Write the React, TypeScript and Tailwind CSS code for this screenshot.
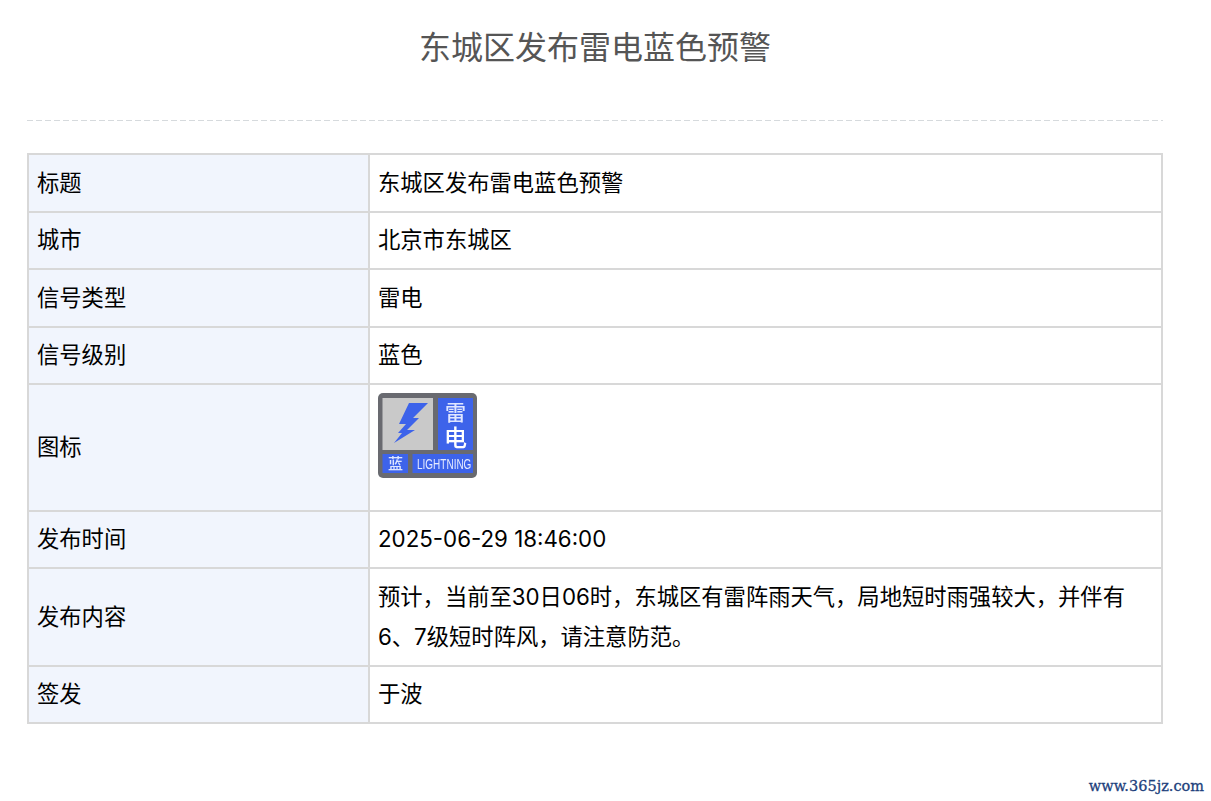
const rows: { label: string; value: string; h: string }[] = [
  { label: '标题', value: '东城区发布雷电蓝色预警', h: 'h-[58px]' },
  { label: '城市', value: '北京市东城区', h: 'h-[57px]' },
  { label: '信号类型', value: '雷电', h: 'h-[58px]' },
  { label: '信号级别', value: '蓝色', h: 'h-[57px]' },
];

const rowsAfter: { label: string; value: string; h: string }[] = [
  { label: '发布时间', value: '2025-06-29 18:46:00', h: 'h-[57px]' },
  {
    label: '发布内容',
    value: '预计，当前至30日06时，东城区有雷阵雨天气，局地短时雨强较大，并伴有6、7级短时阵风，请注意防范。',
    h: 'h-[98px]',
  },
  { label: '签发', value: '于波', h: 'h-[57px]' },
];

function LightningIcon() {
  return (
    <svg width="99" height="85" viewBox="0 0 99 85" className="block">
      <defs>
        <filter id="soft">
          <feGaussianBlur stdDeviation="0.55" />
        </filter>
      </defs>
      <g filter="url(#soft)">
        <rect x="0" y="0" width="99" height="85" rx="5" fill="#696b70" />
        <rect x="4.5" y="5" width="50.5" height="52" fill="#c9c9c9" />
        <rect x="60" y="5" width="35" height="52" fill="#3d63ea" />
        <rect x="4.5" y="61" width="25.5" height="19" fill="#3d63ea" />
        <rect x="34.5" y="61" width="60.5" height="19" fill="#3d63ea" />
        <path
          d="M31 10 L50 10 L35 25 L41 25 L29 37 L37 37 L16 50 L24 40 L20 40 L28 31 L21 31 Z"
          fill="#3d63ea"
        />
        <text x="77.5" y="27" textAnchor="middle" fontSize="21" fontWeight="500" fill="#dfe6ff" fontFamily="'Noto Sans CJK SC', sans-serif">
          雷
        </text>
        <text x="77.5" y="53" textAnchor="middle" fontSize="23" fontWeight="500" fill="#ffffff" fontFamily="'Noto Sans CJK SC', sans-serif">
          电
        </text>
        <text x="17.5" y="76" textAnchor="middle" fontSize="15" fontWeight="500" fill="#dfe6ff" fontFamily="'Noto Sans CJK SC', sans-serif">
          蓝
        </text>
        <text
          x="0"
          y="0"
          transform="translate(39 75.5) scale(1 1.5)"
          fontSize="10"
          fill="#e6ebff"
          fontFamily="'Liberation Sans', sans-serif"
        >
          LIGHTNING
        </text>
      </g>
    </svg>
  );
}

function Row({ label, h, children }: { label: string; h: string; children: React.ReactNode }) {
  return (
    <tr className={h}>
      <td className="w-[341px] border-2 border-[#d8d8d8] bg-[#f1f5fd] px-[8px] pt-0 pb-[1px] align-middle">{label}</td>
      <td className="border-2 border-[#d8d8d8] bg-white px-[8px] pt-0 pb-[1px] align-middle">{children}</td>
    </tr>
  );
}

export default function App() {
  return (
    <div className="relative h-[801px] w-[1211px] overflow-hidden bg-white font-['Inter','Noto_Sans_CJK_SC',sans-serif] text-black">
      <div className="ml-[27px] w-[1136px]">
        <h1 className="flex h-[120px] items-start justify-center pt-[24px] text-[32px] leading-[48px] font-normal text-[#555555]">
          东城区发布雷电蓝色预警
        </h1>
        {/* dashes are longer than border-dashed gives at 1px */}
        <div className="h-px bg-[repeating-linear-gradient(90deg,#d6dadd_0px,#d6dadd_6px,transparent_6px,transparent_9px)]" />
        <table className="mt-[32px] w-full table-fixed border-collapse text-[22.3px] leading-[40px]">
          <tbody>
            {rows.map((r) => (
              <Row key={r.label} label={r.label} h={r.h}>
                {r.value}
              </Row>
            ))}
            <Row label="图标" h="h-[127px]">
              <div className="pb-[31px] pt-[8px]">
                <LightningIcon />
              </div>
            </Row>
            {rowsAfter.map((r) => (
              <Row key={r.label} label={r.label} h={r.h}>
                {r.value}
              </Row>
            ))}
          </tbody>
        </table>
      </div>
      <div className="absolute right-[7px] top-[776px] font-['DejaVu_Serif',serif] text-[14.5px] leading-[20px] font-normal text-[#1d3f7c] [-webkit-text-stroke:0.3px_#1d3f7c]">
        www.365jz.com
      </div>
    </div>
  );
}
